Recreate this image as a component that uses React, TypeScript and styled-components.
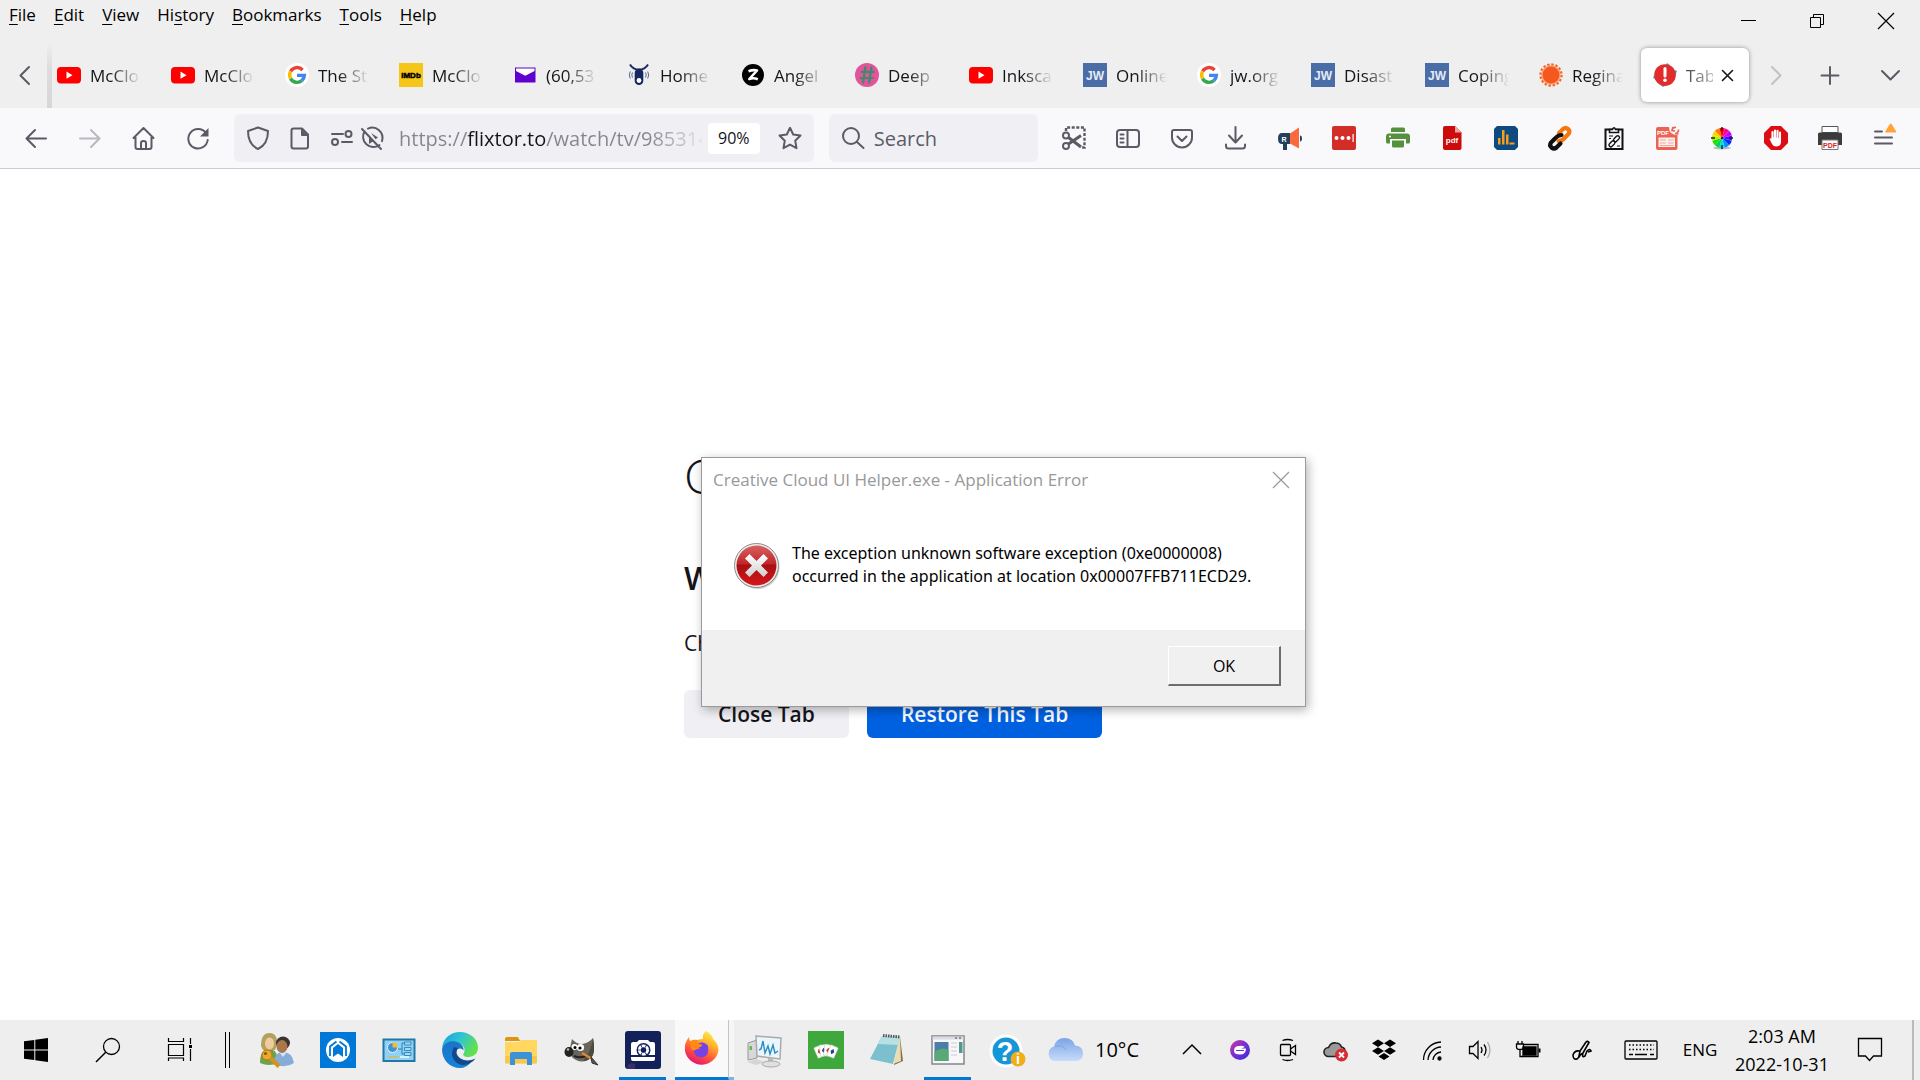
import React from "react";
import styled, { createGlobalStyle, css } from "styled-components";

const GlobalStyle = createGlobalStyle`
  *, *::before, *::after { box-sizing: border-box; }
  html, body { margin: 0; padding: 0; height: 100%; }
  body {
    font-family: "Open Sans", "Noto Sans", "Liberation Sans", sans-serif;
    font-size: 17px;
    line-height: 24px;
    color: #15141a;
    background: #fff;
    overflow: hidden;
  }
  #root { height: 100%; }
  button, input { font: inherit; color: inherit; }
`;

/* ---------- shared ---------- */

const Desktop = styled.div`
  height: 100vh;
  display: flex;
  flex-direction: column;
`;

const Icon = styled.svg<{ $size?: number }>`
  width: ${(p) => p.$size ?? 24}px;
  height: ${(p) => p.$size ?? 24}px;
  flex: none;
  display: block;
  overflow: visible;
`;

const PlainButton = styled.button`
  appearance: none;
  border: 0;
  padding: 0;
  margin: 0;
  background: transparent;
  display: flex;
  align-items: center;
  justify-content: center;
  flex: none;
`;

/* ---------- title area ---------- */

const TitleBar = styled.header`
  display: flex;
  justify-content: space-between;
  height: 42px;
  background: #efefef;
`;

const MenuBar = styled.nav`
  display: flex;
  gap: 18px;
  padding: 3px 9px 0;
  height: 30px;
`;

const MenuItem = styled(PlainButton)`
  color: #000;
  height: 24px;
`;

const Mnemonic = styled.span`
  text-decoration: underline;
  text-underline-offset: 3px;
  text-decoration-thickness: 1px;
`;

const WindowControls = styled.div`
  display: flex;
`;

const WindowButton = styled(PlainButton)`
  width: 69px;
  height: 42px;
`;

/* ---------- tabs ---------- */

const TabBar = styled.div`
  display: flex;
  height: 66px;
  background: #efefef;
`;

const TabBarButton = styled(PlainButton)<{ $width: number; $first?: boolean }>`
  width: ${(p) => p.$width}px;
  padding-left: ${(p) => (p.$first ? 8 : 0)}px;
  color: #5b5b66;
`;

const TabStrip = styled.div`
  position: relative;
  flex: 1;
  min-width: 0;
  display: flex;
  &::before {
    content: "";
    position: absolute;
    left: 5px;
    top: 0;
    bottom: 0;
    width: 5px;
    background: linear-gradient(to bottom, rgba(0, 0, 0, 0), rgba(0, 0, 0, 0.08) 40%, rgba(0, 0, 0, 0.1));
  }
`;

const TabButton = styled.div<{ $active?: boolean }>`
  flex: 1 1 0;
  min-width: 0;
  display: flex;
  align-items: center;
  gap: 9px;
  margin: 6px 3px;
  padding: 0 12px;
  border-radius: 6px;
  ${(p) =>
    p.$active &&
    css`
      background: #fff;
      box-shadow: 0 0 4px rgba(0, 0, 0, 0.4);
    `}
`;

const TabLabel = styled(PlainButton)<{ $active?: boolean }>`
  flex: 1;
  min-width: 0;
  height: 26px;
  padding-top: 2px;
  overflow: hidden;
  justify-content: flex-start;
  white-space: nowrap;
  color: #15141a;
  mask-image: linear-gradient(to right, ${(p) => (p.$active ? "rgba(0,0,0,.8), rgba(0,0,0,.3)" : "#000 40%, transparent")});
`;

const TabClose = styled(PlainButton)`
  width: 24px;
  height: 24px;
  margin: 0 -3px 0 -6px;
`;

/* ---------- navigation ---------- */

const NavBar = styled.div`
  display: flex;
  align-items: center;
  height: 61px;
  padding: 0 9px;
  background: #f9f9fb;
  border-bottom: 1px solid #ccc;
`;

const ToolButton = styled(PlainButton)<{ $dim?: boolean }>`
  width: 54px;
  height: 48px;
  color: #5b5b66;
  opacity: ${(p) => (p.$dim ? 0.4 : 1)};
`;

const UrlBox = styled.div`
  flex: 3 1 0;
  min-width: 0;
  display: flex;
  align-items: center;
  gap: 18px;
  height: 48px;
  margin: 0 15px 0 9px;
  padding: 0 12px;
  border-radius: 6px;
  background: #f0f0f4;
  color: #5b5b66;
`;

const IconPair = styled.div`
  display: flex;
  gap: 6px;
`;

const UrlInput = styled.input`
  flex: 1;
  min-width: 0;
  border: 0;
  outline: 0;
  padding: 2px 0 0;
  margin: 0 -12px 0 -3px;
  font-size: 20px;
  line-height: 28px;
  color: transparent;
  background: linear-gradient(to right, #84848c 68px, #15141a 68px, #15141a 147px, #84848c 147px, #84848c 250px, transparent 308px);
  -webkit-background-clip: text;
  background-clip: text;
`;

const ZoomBadge = styled(PlainButton)`
  width: 52px;
  height: 31px;
  border-radius: 4px;
  background: #fff;
  color: #15141a;
  font-size: 16px;
`;

const SearchBox = styled.label`
  flex: 1 1 0;
  min-width: 0;
  display: flex;
  align-items: center;
  gap: 9px;
  height: 48px;
  margin-right: 9px;
  padding: 0 12px;
  border-radius: 6px;
  background: #f0f0f4;
  color: #5b5b66;
`;

const SearchInput = styled.input`
  flex: 1;
  min-width: 0;
  border: 0;
  outline: 0;
  padding: 2px 0 0;
  background: transparent;
  font-size: 20px;
  line-height: 28px;
  &::placeholder { color: #5b5b66; opacity: 1; }
`;

/* ---------- page ---------- */

const Page = styled.main`
  position: relative;
  flex: 1;
  min-height: 0;
  background: #fff;
  padding: 275px 0 0 684px;
`;

const CrashTitle = styled.h1`
  max-width: 600px;
  overflow: hidden;
  white-space: nowrap;
  margin: 0;
  font-size: 48px;
  line-height: 64px;
  font-weight: 300;
`;

const CrashSubtitle = styled.h2`
  margin: 48px 0 0;
  font-size: 32px;
  line-height: 44px;
  font-weight: 600;
`;

const CrashText = styled.p`
  margin: 29px 0 33px;
  font-size: 21px;
  line-height: 28px;
`;

const CrashActions = styled.div`
  display: flex;
  gap: 18px;
`;

const CrashButton = styled(PlainButton)<{ $primary?: boolean }>`
  height: 48px;
  padding: 0 34px;
  border-radius: 6px;
  font-size: 21px;
  font-weight: 600;
  background: ${(p) => (p.$primary ? "#0061e0" : "#f0f0f4")};
  color: ${(p) => (p.$primary ? "#fbfbfe" : "#15141a")};
`;

/* ---------- dialog ---------- */

const Dialog = styled.section`
  position: absolute;
  left: 701px;
  top: 288px;
  width: 605px;
  border: 1px solid #9a9a9a;
  background: #fff;
  box-shadow: 2px 3px 10px rgba(0, 0, 0, 0.3);
  color: #000;
`;

const DialogHeader = styled.div`
  display: flex;
  align-items: center;
  justify-content: space-between;
  height: 44px;
  padding: 0 12px 0 11px;
  color: #999;
`;

const DialogTitle = styled.h3`
  margin: 0;
  font-size: 17px;
  font-weight: 400;
`;

const DialogClose = styled(PlainButton)`
  width: 24px;
  height: 24px;
`;

const DialogBody = styled.div`
  display: flex;
  align-items: center;
  gap: 12px;
  height: 128px;
  padding: 0 20px 2px 31px;
`;

const DialogText = styled.p`
  margin: 0;
  font-family: "Noto Sans", "Open Sans", sans-serif;
  font-size: 16px;
  line-height: 23px;
  white-space: pre-line;
`;

const DialogFooter = styled.div`
  display: flex;
  justify-content: flex-end;
  padding: 16px 24px 20px;
  background: #f0f0f0;
`;

const OkButton = styled(PlainButton)`
  width: 113px;
  height: 40px;
  border: solid;
  border-width: 1px 2px 2px 1px;
  border-color: #fff #6d6d6d #6d6d6d #fff;
  background: #f0f0f0;
  font-size: 16px;
`;

/* ---------- taskbar ---------- */

const TaskBar = styled.footer`
  display: flex;
  align-items: stretch;
  height: 60px;
  background: #eee;
  color: #000;
`;

const SystemButton = styled(PlainButton)`
  width: 72px;
`;

const TaskDivider = styled.div`
  width: 5px;
  margin: 12px 16px 12px 9px;
  border: solid #000;
  border-width: 0 1px;
`;

const AppButton = styled(PlainButton)<{ $running?: boolean }>`
  position: relative;
  width: 61px;
  ${(p) =>
    p.$running &&
    css`
      &::after {
        content: "";
        position: absolute;
        left: 7px;
        right: 7px;
        bottom: 0;
        height: 3px;
        background: #0078d4;
      }
    `}
`;

const StackedApp = styled(PlainButton)`
  width: 61px;
  padding-left: 2px;
  align-items: stretch;
`;

const StackFront = styled.span`
  flex: 1;
  display: flex;
  align-items: center;
  justify-content: center;
  background: #f9f9f9;
  border-right: 1px solid #c4c4c4;
  border-bottom: 3px solid #0078d4;
`;

const StackBack = styled.span`
  width: 5px;
  background: #f6f6f6;
  border-bottom: 3px solid #76b5e6;
`;

const Weather = styled(PlainButton)`
  gap: 12px;
  padding-left: 8px;
  font-size: 20px;
`;

const Spacer = styled.div`
  flex: 1;
`;

const TrayButton = styled(PlainButton)<{ $width?: number }>`
  width: ${(p) => p.$width ?? 48}px;
`;

const NotificationButton = styled(PlainButton)`
  width: 78px;
  padding-right: 6px;
`;

const Clock = styled(PlainButton)`
  width: 104px;
  flex-direction: column;
  font-size: 18px;
  line-height: 28px;
`;

const ShowDesktop = styled(PlainButton)`
  width: 8px;
  border-left: 2px solid #bbb;
`;

/* ---------- icons ---------- */

const line = { fill: "none", stroke: "currentColor", strokeWidth: 2, strokeLinecap: "round", strokeLinejoin: "round" } as const;
const svgText = { fontFamily: "Liberation Sans, sans-serif", fontWeight: 700, textAnchor: "middle" } as const;

const YouTube = () => (
  <Icon viewBox="0 0 24 24">
    <rect x="0" y="4" width="24" height="16.5" rx="4" fill="#f00" />
    <path d="M9.500 8.600v7.200l6-3.600z" fill="#fff" />
  </Icon>
);
const Google = () => (
  <Icon viewBox="0 0 24 24">
    <circle cx="12" cy="12" r="12" fill="#fff" />
    <g fill="none" strokeWidth="3.400">
      <path d="M17.600 7A7.400 7.400 0 0 0 5.600 8.400" stroke="#ea4335" />
      <path d="M5.600 8.400a7.600 7.600 0 0 0 0 7.200" stroke="#fbbc05" />
      <path d="M5.600 15.600a7.400 7.400 0 0 0 11.200 2" stroke="#34a853" />
      <path d="M16.800 17.600a7 7 0 0 0 2.600-5.200H12" stroke="#4285f4" />
    </g>
  </Icon>
);
const Imdb = () => (
  <Icon viewBox="0 0 24 24">
    <path d="M0 0h24v24H0z" fill="#f5c518" />
    <text x="12" y="15" fontSize="8" stroke="#000" strokeWidth=".5" {...svgText}>IMDb</text>
  </Icon>
);
const YMail = () => (
  <Icon viewBox="0 0 24 24">
    <path d="M2 4.500h20.500v15H2z" fill="#6001d2" />
    <path d="M3 5.500h18.500v2.500l-9.200 4.800L3 8z" fill="#fff" />
  </Icon>
);
const Bell = () => (
  <Icon viewBox="0 0 24 24">
    <path d="M3 1.500c2.500 4.200 6 5.200 9 5.200s6.500-1 9-5.200" fill="none" stroke="#1c2b63" strokeWidth="2" />
    <rect x="7.700" y="5.500" width="8.600" height="16.500" rx="4.300" fill="#14275f" />
    <circle cx="12" cy="17.500" r="2.400" fill="#fff" />
    <path d="M5.500 9.500q-1.500 2.500 0 5M3.300 8.500q-2 3.500 0 7M18.500 9.500q1.500 2.500 0 5M20.700 8.500q2 3.500 0 7" fill="none" stroke="#5a6790" />
  </Icon>
);
const Zazzle = () => (
  <Icon viewBox="0 0 24 24">
    <circle cx="12" cy="12" r="11" />
    <path d="M7.500 8.300q4.500-1.800 8.500-.8L8.300 16q4.700-1.600 8.500.3" fill="none" stroke="#fff" strokeWidth="2.600" strokeLinejoin="round" />
  </Icon>
);
const Hash = () => (
  <Icon viewBox="0 0 24 24">
    <circle cx="12" cy="12" r="12" fill="#e0559c" />
    <path d="M10.500 3.500L8 20.500M16.500 3.500L14 20.500M6 8.800h13.500M5 15h13.500" stroke="#3f8a68" strokeWidth="2.200" />
  </Icon>
);
const Jw = () => (
  <Icon viewBox="0 0 24 24">
    <path d="M0 0h24v24H0z" fill="#4a6da7" />
    <text x="12" y="16.500" fontSize="12" fill="#e6ecf5" {...svgText}>JW</text>
  </Icon>
);
const Sun = () => (
  <Icon viewBox="0 0 24 24">
    <circle cx="12" cy="12" r="10.500" fill="none" stroke="#f26522" strokeWidth="2.400" strokeDasharray="2.400 1.720" />
    <circle cx="12" cy="12" r="9.800" fill="#f9a57a" />
    <circle cx="12" cy="12" r="8.400" fill="#f4581c" />
  </Icon>
);
const Crash = () => (
  <Icon viewBox="0 0 24 24">
    <path d="M14 0l3 2-6 3zM22 7l2 1-2 6zM1 12l-1 3 4 2zM7 22l3 2 4-2z" fill="#4aa8d8" />
    <circle cx="12" cy="12" r="10.800" fill="#e22b2b" />
    <path d="M12 5.500v7.500" stroke="#fff" strokeWidth="3" strokeLinecap="round" />
    <circle cx="12" cy="17.300" r="1.800" fill="#fff" />
  </Icon>
);

const BarIcons = {
  left: <Icon viewBox="0 0 24 24"><path d="M16 4l-8.500 8.500L16 21" {...line} /></Icon>,
  right: <Icon viewBox="0 0 24 24"><path d="M8 4l8.500 8.500L8 21" {...line} strokeOpacity=".3" /></Icon>,
  plus: <Icon viewBox="0 0 24 24"><path d="M12 4v17M3.500 12.500h17" {...line} /></Icon>,
  down: <Icon viewBox="0 0 24 24"><path d="M4 8l8.500 8.500L21 8" {...line} /></Icon>,
  close: <Icon viewBox="0 0 24 24"><path d="M6.500 7.500l10 10M16.500 7.500l-10 10" {...line} stroke="#15141a" strokeWidth="1.600" /></Icon>,
};

const Back = () => <Icon viewBox="0 0 24 24"><path d="M22 12.500H3M11 4l-8.500 8.500L11 21" {...line} /></Icon>;
const Forward = () => <Icon viewBox="0 0 24 24"><path d="M2 12.500h19M13 4l8.500 8.500L13 21" {...line} /></Icon>;
const Home = () => (
  <Icon viewBox="0 0 24 24">
    <path d="M1.500 12L11.500 2l10 10M3.500 11v10q0 2 2 2h12q2 0 2-2V11M9 23v-6q0-2 2.500-2t2.500 2v6" {...line} />
  </Icon>
);
const Reload = () => (
  <Icon viewBox="0 0 24 24">
    <path d="M20 7.200A9.700 9.700 0 1 0 21.700 14" {...line} />
    <path d="M22.500 2v8.500H14z" fill="currentColor" />
  </Icon>
);
const Shield = () => <Icon viewBox="0 0 24 24"><path d="M12 1.500L22 5c0 8-2.500 14.500-10 18C4.500 19.500 2 13 2 5z" {...line} /></Icon>;
const PageIcon = () => (
  <Icon viewBox="0 0 24 24">
    <path d="M5.500 2.500H14l6 6v12q0 2-2 2H5.500q-2 0-2-2v-16q0-2 2-2z" {...line} />
    <path d="M13.500 3v6.500h6.500z" fill="currentColor" stroke="currentColor" />
  </Icon>
);
const Permissions = () => (
  <Icon viewBox="0 0 24 24">
    <path d="M2 8h11M12 16h10" {...line} />
    <circle cx="18.500" cy="8" r="3" {...line} />
    <circle cx="5" cy="16" r="3" {...line} />
  </Icon>
);
const NoAutoplay = () => (
  <Icon viewBox="0 0 24 24">
    <path d="M8 2.600a10.300 10.300 0 0 1 14 12.500M19.500 19A10.300 10.300 0 0 1 4.600 5.300M2 3l19 20" {...line} />
    <path d="M11 7l7 4.500-2.500 1.700zM9 11v7l4.500-3z" fill="currentColor" />
  </Icon>
);
const Star = () => <Icon viewBox="0 0 24 24"><path d="M12 1.800l3.200 6.700 7.300 1-5.300 5.200 1.300 7.500-6.500-3.600-6.500 3.600 1.300-7.500L1.500 9.500l7.300-1z" {...line} /></Icon>;
const Magnifier = () => <Icon viewBox="0 0 24 24"><circle cx="10" cy="10" r="8" {...line} /><path d="M16 16l6.500 6" {...line} /></Icon>;

const Screenshot = () => (
  <Icon viewBox="0 0 24 24">
    <path d="M4 5V1.500h18.500v20H19" fill="none" stroke="currentColor" strokeWidth="2.400" strokeDasharray="3 1.600" />
    <circle cx="4" cy="9.500" r="3" {...line} />
    <circle cx="4" cy="20" r="3" {...line} />
    <path d="M6.500 18L19 9.500M6.500 11.500L19 21" fill="none" stroke="currentColor" strokeWidth="3" />
  </Icon>
);
const Sidebar = () => (
  <Icon viewBox="0 0 24 24">
    <rect x="1" y="4" width="22" height="17" rx="3" {...line} />
    <path d="M11.500 4v17M4.500 8.500h3M4.500 12.500h3M4.500 16.500h3" {...line} />
  </Icon>
);
const Pocket = () => <Icon viewBox="0 0 24 24"><path d="M4 4h16q2 0 2 2v5.500a10 10 0 0 1-20 0V6q0-2 2-2zM7.500 10.500L12 15l4.500-4.500" {...line} /></Icon>;
const Download = () => <Icon viewBox="0 0 24 24"><path d="M11.500 1v15M5 9.500l6.500 7 6.500-7M2 18.500V20q0 2.500 2.500 2.500h14q2.500 0 2.500-2.500v-1.500" {...line} /></Icon>;
const Megaphone = () => (
  <Icon viewBox="0 0 24 24">
    <path d="M4 7h8v11H9v6H5v-6H4Q0 18 0 12.500T4 7z" fill="#23405c" />
    <path d="M12 7.500l9-6v21l-9-5z" fill="#fb6a3c" />
    <path d="M22 9.500q2 0 2 3t-2 3z" fill="#23405c" />
    <text x="6" y="15.500" fontSize="7" fill="#fff" {...svgText}>R</text>
  </Icon>
);
const LastPass = () => (
  <Icon viewBox="0 0 24 24">
    <rect width="24" height="24" rx="2" fill="#d32d27" />
    <g fill="#fff"><circle cx="4.500" cy="12" r="2" /><circle cx="10.500" cy="12" r="2" /><circle cx="16.500" cy="12" r="2" /><path d="M20.500 8h1.200v8h-1.200z" /></g>
  </Icon>
);
const Printer = () => (
  <Icon viewBox="0 0 24 24">
    <path d="M5 6V3q0-1.500 1.500-1.500h11Q19 1.500 19 3v3z" fill="#568f3d" />
    <path d="M3 7.500h18q3 0 3 3V16q0 1.500-1.500 1.500H20V13H4v4.500H1.500Q0 17.500 0 16v-5.500q0-3 3-3z" fill="#568f3d" />
    <path d="M6 14.500h12V20q0 1.500-1.500 1.500h-9Q6 21.500 6 20z" fill="#568f3d" />
    <path d="M3 10.500h2" stroke="#fff" strokeWidth="1.500" />
  </Icon>
);
const PdfFile = () => (
  <Icon viewBox="0 0 24 24">
    <path d="M5 0h10l6.500 6.500V22q0 2-2 2H5q-2 0-2-2V2q0-2 2-2z" fill="#cc0b0b" />
    <path d="M15 0l6.500 6.500H15z" fill="#f0a3a3" />
    <text x="12" y="17" fontSize="8" fill="#fff" {...svgText}>pdf</text>
  </Icon>
);
const BarChart = () => (
  <Icon viewBox="0 0 24 24">
    <path d="M3 0h18l3 3v18l-3 3H3l-3-3V3z" fill="#0e4a80" />
    <path d="M4 12h2.500v6.500H4zM8 4h2.500v14.500H8zM12 8.500h2.500v10H12zM15.500 16.500h5v2h-5z" fill="#f5a01b" />
  </Icon>
);
const LinkChain = () => (
  <Icon viewBox="0 0 24 24" fill="none" strokeWidth="4.200" strokeLinecap="round">
    <path d="M10.500 15q4 0 7-4l3-3q2-3-.5-5t-5 0l-4 4" stroke="#f5770d" />
    <path d="M13.500 9q-3.500 0-6.500 3.500l-4 4q-2 3 .5 5t5 0l4-4" stroke="#111" />
  </Icon>
);
const ClipLink = () => (
  <Icon viewBox="0 0 24 24" fill="none" stroke="#111" strokeWidth="2">
    <path d="M3.500 3.500h17v19.500h-17z" />
    <path d="M7.500 6.500v-3h3q1.500-3.500 3 0h3v3z" fill="#f9f9fb" strokeWidth="1.600" />
    <path d="M7 10h4M7 12.500h2M15 20h3" strokeWidth="1.200" />
    <g strokeWidth="1.400"><rect x="11" y="11" width="7" height="3.600" rx="1.800" transform="rotate(-45 14.500 12.800)" /><rect x="6.500" y="16" width="7" height="3.600" rx="1.800" transform="rotate(-45 10 17.800)" /></g>
  </Icon>
);
const PdfSync = () => (
  <Icon viewBox="0 0 24 24">
    <path d="M2 1h11q0 8 8.500 8v13q0 2-2 2H2q-2 0-2-2V3q0-2 2-2z" fill="#ec6353" />
    <path d="M2.500 11.500h16.500v9.500H2.500z" fill="#fdeeee" />
    <path d="M4 14h6M12 14h5.500M4 17h6M12 17h5.500M4 19.500h13.500" stroke="#f2a79d" />
    <text x="7" y="8.500" fontSize="6" fill="#fff" {...svgText}>PDF</text>
    <path d="M16 4a3.500 3.500 0 0 1 4-2.500M22.500 3.500A3.500 3.500 0 0 1 19 7.500M17 1l-1 3.500 3 .5M22.500 8L19 7.500" fill="none" stroke="#ec6353" strokeWidth="1.700" />
  </Icon>
);
const wheelColors = ["#ffd400", "#ff7a00", "#ff0000", "#ff008c", "#c800ff", "#5a00ff", "#0028ff", "#0090ff", "#00e0e0", "#00d060", "#20e000", "#b0f000"];
const ColorWheel = () => (
  <Icon viewBox="0 0 24 24">
    <ellipse cx="12" cy="22" rx="9" ry="1.500" fill="#bbb" />
    {wheelColors.map((c, i) => (
      <path key={c} d="M12 12L9.400 2.200A10 10 0 0 1 14.600 2.200z" fill={c} transform={`rotate(${i * 30 - 60} 12 12)`} />
    ))}
    <path d="M12 1v4M12 19v4M1 12h4M19 12h4" stroke="#222" strokeWidth="1.500" />
    <circle cx="12" cy="12" r="1.200" fill="#222" />
  </Icon>
);
const AdBlock = () => (
  <Icon viewBox="0 0 24 24">
    <path d="M7 0h10l7 7v10l-7 7H7l-7-7V7z" fill="#dc0d15" />
    <path d="M8.500 13V6M11 12V4.500M13.500 12V4.700M16 13V6.500" stroke="#fff" strokeWidth="2.100" strokeLinecap="round" />
    <path d="M7.500 11.500H17v4q0 5-4.500 5-3.500 0-5-3.500L5.500 13q1-1.500 2 0z" fill="#fff" />
  </Icon>
);
const PrintPdf = () => (
  <Icon viewBox="0 0 24 24">
    <path d="M4 .5h16v6H4z" fill="#fff" stroke="#555" />
    <path d="M1.500 6.500h21q1.500 0 1.500 1.500v11h-4v-5H4v5H0V8q0-1.500 1.500-1.500z" fill="#3c3c3c" />
    <path d="M4 14h16v9.500H4z" fill="#fff" stroke="#777" />
    <text x="12" y="21.500" fontSize="7" fill="#d9231d" {...svgText}>PDF</text>
  </Icon>
);
const AppMenu = () => (
  <Icon viewBox="0 0 24 24">
    <path d="M3 5.500h7M3 11.500h17M3 17.500h17" {...line} />
    <path d="M13.500 6l4.500-7.500q.7-1 1.400 0L24 6z" fill="#ffa436" stroke="#ffa436" strokeLinejoin="round" />
  </Icon>
);

const ErrorMark = () => (
  <Icon $size={47} viewBox="0 0 47 47">
    <defs>
      <linearGradient id="err" x1="0" y1="0" x2="0" y2="1"><stop offset="0" stopColor="#d9605f" /><stop offset=".45" stopColor="#c0282c" /><stop offset=".5" stopColor="#a80f14" /><stop offset="1" stopColor="#d5161a" /></linearGradient>
      <linearGradient id="cross" x1="0" y1="0" x2="0" y2="1"><stop offset="0" stopColor="#fff" /><stop offset="1" stopColor="#cfcfcf" /></linearGradient>
    </defs>
    <circle cx="24.500" cy="25" r="22" fill="#000" opacity=".2" />
    <circle cx="23.500" cy="23.500" r="22" fill="#eee" stroke="#8a8a8a" />
    <circle cx="23.500" cy="23.500" r="20" fill="url(#err)" />
    <path d="M16.500 12l7 7 7-7 4.500 4.500-7 7 7 7-4.500 4.500-7-7-7 7-4.500-4.500 7-7-7-7z" fill="url(#cross)" />
  </Icon>
);

const WinStart = () => <Icon viewBox="0 0 24 24"><path d="M0 3.300l10.300-1.400v9.600H0zM11.300 1.700L24 0v11.500H11.300zM0 12.500h10.300v9.600L0 20.700zM11.300 12.500H24V24l-12.700-1.700z" /></Icon>;
const TaskSearch = () => <Icon viewBox="0 0 24 24"><circle cx="15.500" cy="8.500" r="8" fill="none" stroke="#000" strokeWidth="1.300" /><path d="M9.700 14.300L0 24" stroke="#000" strokeWidth="1.500" /></Icon>;
const TaskView = () => (
  <Icon viewBox="0 0 24 24" fill="none" stroke="#000" strokeWidth="1.200">
    <path d="M.5 0v3.500h15V0M.5 6.500h15v11H.5zM.5 23v-3h15v3M22.500 0v6M22.500 11v12" />
    <path d="M21 7h3v3h-3z" fill="#000" stroke="none" />
  </Icon>
);
const Users = () => (
  <Icon $size={36} viewBox="0 0 36 36">
    <path d="M1 31q0-14 9-14t9 14q-9 4-18 0z" fill="#6fa24a" />
    <path d="M2 14Q2 1 10.500 1T18 13l-2 5H4z" fill="#b3a15f" /><ellipse cx="10.500" cy="11.500" rx="4.500" ry="6" fill="#f0cba0" />
    <path d="M15 32q0-12 9-12t11 11q-9 6-20 1z" fill="#86acd8" /><path d="M20 20h8l-4 5z" fill="#d5e4f5" />
    <ellipse cx="24" cy="11" rx="7" ry="6.500" fill="#3a3431" /><ellipse cx="23" cy="14.500" rx="5.500" ry="6.500" fill="#a8784c" />
    <circle cx="8" cy="23" r="5" fill="#e9ab2d" stroke="#b97710" /><circle cx="6.500" cy="21.500" r="1.600" fill="#8b5a08" />
    <path d="M11.500 26l8.500 8.500" stroke="#d8921b" strokeWidth="4" />
  </Icon>
);
const Acronis = () => (
  <Icon $size={36} viewBox="0 0 36 36">
    <path d="M0 0h36v36H0z" fill="#0078d7" />
    <circle cx="18" cy="18" r="12" fill="#fff" />
    <path d="M10 24V14.500l6.500-5M26 24V14.500l-6.500-5" fill="none" stroke="#0078d7" strokeWidth="1.800" />
    <path d="M13 25V16l5-4 5 4v9l-5-3.500z" fill="#0078d7" />
  </Icon>
);
const ControlPanel = () => (
  <Icon $size={36} viewBox="0 0 36 36">
    <rect x="2.500" y="7.500" width="31" height="21.500" fill="#8fd2f5" stroke="#2178a6" strokeWidth="2" />
    <circle cx="11.500" cy="15.500" r="5" fill="#3d92cf" stroke="#e6f6ff" /><path d="M11.500 15.500v-5.500a5.500 5.500 0 0 1 5.500 5.500z" fill="#f0bb3a" />
    <path d="M17 17h4v-6h3M21 17v5h3" fill="none" stroke="#2980b0" />
    <path d="M23.500 10h6.500v3h-6.500zM23.500 15.500h6.500v3h-6.500zM23.500 20.500h6.500v3h-6.500z" fill="#9fdcf8" stroke="#398abb" />
    <path d="M7 25h11" stroke="#d8b65a" strokeWidth="1.500" /><path d="M19 25h9" stroke="#d5f1ff" strokeWidth="2" />
  </Icon>
);
const Edge = () => (
  <Icon $size={36} viewBox="0 0 36 36">
    <defs>
      <linearGradient id="eg" x1="0" y1="0" x2="1" y2=".5"><stop offset="0" stopColor="#1b9de0" /><stop offset=".5" stopColor="#2ec4d4" /><stop offset="1" stopColor="#63e04e" /></linearGradient>
      <linearGradient id="eb" x1="0" y1="0" x2="0" y2="1"><stop offset="0" stopColor="#1b74c8" /><stop offset="1" stopColor="#1583d8" /></linearGradient>
    </defs>
    <path d="M0 16C1 6 9 0 18 0c10 0 18 7 18 15.500 0 6-4.500 9.500-9.500 9.500-4 0-6-1.500-5-3.500 2-2.500 1.500-7-3-9.500C12 8.500 3 10 0 16z" fill="url(#eg)" />
    <path d="M0 17.500C1 11 8 8.500 13 9.500c6 1 9 5 8.500 9-1.500-3-7-3-7.500 2 0 7 8 11 15 9.500Q24.500 36 18 36C8 36 0 28 0 17.500z" fill="url(#eb)" />
    <path d="M12 15q-4 7 0 13 6 8 15.500 3.500 4-2 6-5c-8 4-17 1.500-19-5.500q-.5-3 1.500-5z" fill="#114a8b" />
  </Icon>
);
const Folder = () => (
  <Icon $size={36} viewBox="0 0 36 36">
    <path d="M2 7q0-2 2-2h11l2 4H2z" fill="#d9980f" />
    <path d="M2 10h14l2-2h16v22q0 1.500-1.500 1.500h-29Q2 31.500 2 30z" fill="#ffd761" />
    <path d="M2 24h32v6q0 1.500-1.500 1.500h-29Q2 31.500 2 30z" fill="#f7c84a" />
    <path d="M7 33V22q0-2 2-2h18q2 0 2 2v11h-5v-6H12v6z" fill="#3c92d8" />
  </Icon>
);
const Gimp = () => (
  <Icon $size={36} viewBox="0 0 36 36">
    <path d="M6 16q1-5 2-9 4 5 10 5 7-1 11-6 3 15-2 20-7 6-15 2-7-3-6-12z" fill="#69655a" />
    <path d="M29 6q3 15-2 20-4 3-8 3 8-8 10-23z" fill="#4c493f" />
    <circle cx="10.500" cy="15" r="3" fill="#fff" /><circle cx="16.500" cy="15.500" r="3.600" fill="#fff" /><circle cx="11" cy="15.500" r="1.500" /><circle cx="16" cy="16" r="1.600" />
    <ellipse cx="5" cy="20" rx="4.500" ry="5" fill="#222" /><circle cx="4" cy="17.500" r="1.200" fill="#bbb" />
    <path d="M10 24q8 3 13-1" stroke="#222" strokeWidth="2" fill="none" /><path d="M18 21l10 6" stroke="#d98a34" strokeWidth="2.500" /><path d="M27 25l7 8-6-2z" fill="#555" stroke="#333" />
  </Icon>
);
const Camera = () => (
  <Icon $size={36} viewBox="0 0 36 36">
    <rect width="36" height="38" y="-1" rx="3" fill="#12215a" /><path d="M2 37q0-8 8-5v5z" fill="#3c2d6a" />
    <path d="M8 10h4l2-2h9l2 2h3q2 0 2 2v11H6V12q0-2 2-2zM6 25h24v2q0 2-2 2H8q-2 0-2-2z" fill="#fff" />
    <circle cx="18.500" cy="18" r="7" fill="#12215a" /><circle cx="18.500" cy="18" r="4.200" fill="none" stroke="#fff" strokeWidth="2.800" strokeDasharray="3.600 .8" /><circle cx="18.500" cy="18" r="2.200" fill="#12215a" />
  </Icon>
);
const Firefox = () => (
  <Icon $size={36} viewBox="0 0 36 36">
    <defs><linearGradient id="ff" x1=".8" y1="0" x2=".3" y2="1"><stop offset="0" stopColor="#fff44f" /><stop offset=".35" stopColor="#ffb02e" /><stop offset=".65" stopColor="#ff5a36" /><stop offset="1" stopColor="#e2107a" /></linearGradient></defs>
    <path d="M22 0q6 3 7 8 5 4 5.500 11A17 17 0 0 1 1 20Q0 12 5 6q0 3 1.500 4Q9 8 13 9q4-1 6-1-1-5 3-8z" fill="url(#ff)" />
    <path d="M12 13q8-4 12 2 2 10-6 11.500-8 0-8.500-8 3 1 7-1.500-4 0-4.500-4z" fill="#7542e5" />
    <path d="M6 12q4-4 7-3l2 4q4 0 3 2l-5 2.500q-1 2-4 2-3-3-3-7.500z" fill="#ff8a16" />
  </Icon>
);
const PerfMon = () => (
  <Icon $size={36} viewBox="0 0 36 36">
    <path d="M1 11l9-3v18l-9 2z" fill="#d6d8da" stroke="#999" /><path d="M2.500 14h2.500v4H2.500z" fill="#5fbf3f" />
    <path d="M0 30l9-3 9 3-9 3z" fill="#d5d5d5" />
    <path d="M9 4l25 2-1 21-23-3z" fill="#eaf6fc" stroke="#aaa" strokeWidth="1.500" />
    <path d="M12 18l2-1 2-8 2 12 3-7 2 8 3-9 2 8 3-2" fill="none" stroke="#2a8bc4" strokeWidth="1.400" />
    <path d="M21 26h5v5h-5z" fill="#bbb" /><ellipse cx="24" cy="32" rx="9" ry="3" fill="#e0e0e0" stroke="#aaa" />
  </Icon>
);
const Cards = () => (
  <Icon $size={36} viewBox="0 0 36 36">
    <path d="M0-1h36v38H0z" fill="#3fa83d" />
    {[-24, -8, 8, 24].map((a, i) => (
      <g key={a} transform={`rotate(${a} 18 34)`}>
        <rect x="14" y="12.500" width="8" height="11.500" rx="1" fill="#fff" stroke="#a9c9a8" strokeWidth=".5" />
        <path d="M18 15.500l2 2.800-2 2.800-2-2.800z" fill={i % 2 ? "#24408e" : "#d32"} />
      </g>
    ))}
  </Icon>
);
const Notepad = () => (
  <Icon $size={36} viewBox="0 0 36 36">
    <path d="M31 5l3 24-9 4z" fill="#8b6d3a" />
    <path d="M13 4l18 1-7 27-23-5z" fill="#7cc0cf" /><path d="M13 4l18 1-2 8-20-1z" fill="#b6e0e6" /><path d="M24 32l7-27 1 24z" fill="#e8ddb8" />
    <path d="M14 3.500l17 1.500" stroke="#555" strokeWidth="3" strokeDasharray="1.500 1" />
  </Icon>
);
const AppWindow = () => (
  <Icon $size={36} viewBox="0 0 36 36">
    <rect x="2" y="4" width="32" height="28" fill="#f7f7f9" stroke="#85858c" strokeWidth="1.500" /><path d="M2.500 4.500h31v3h-31z" fill="#d9dae4" />
    <path d="M4.500 10h14v19h-14z" fill="#4b7fa8" /><path d="M4.500 20q8-6 14-2v11h-14z" fill="#5aa878" />
    <path d="M21 11h6M21 15h6M21 19h6M21 23h6" stroke="#ccc" /><path d="M29 10h3.500v11H29z" fill="#4f9a8e" /><path d="M25 6h2M29 6h2" stroke="#444" />
  </Icon>
);
const HelpInfo = () => (
  <Icon $size={36} viewBox="0 0 36 36">
    <circle cx="15" cy="19" r="16.500" fill="#fff" /><circle cx="15" cy="19" r="13.500" fill="#1596d6" />
    <text x="14" y="28.500" fontSize="27" fill="#fff" {...svgText}>?</text>
    <circle cx="27" cy="27" r="7.500" fill="#f0ae1c" /><text x="27" y="32" fontSize="14" fill="#fff" {...svgText}>i</text>
  </Icon>
);
const Cloud = () => (
  <Icon $size={36} viewBox="0 0 36 36">
    <defs><linearGradient id="cl" x1="0" y1="0" x2="0" y2="1"><stop offset="0" stopColor="#7ba3e6" /><stop offset="1" stopColor="#c8dcfa" /></linearGradient></defs>
    <path d="M7.500 29A7.500 7.500 0 0 1 7 14.500Q9 6 17.500 6T28 13.500Q36 14 36 21.500 36 29 28.500 29z" fill="url(#cl)" />
    <path d="M8 14.500Q15 12 19 18" fill="none" stroke="#6f98dd" opacity=".6" />
  </Icon>
);

const traySvg = { fill: "none", stroke: "#000", strokeWidth: 1.3 } as const;
const trayIcons: { label: string; icon: React.ReactNode; width?: number }[] = [
  { label: "Show hidden icons", icon: <Icon viewBox="0 0 24 24" {...traySvg}><path d="M3 16l9-9 9 9" strokeWidth="1.500" /></Icon> },
  {
    label: "Chat",
    icon: (
      <Icon viewBox="0 0 24 24">
        <defs><linearGradient id="pu" x1="0" y1="0" x2="1" y2="1"><stop offset="0" stopColor="#d33a9d" /><stop offset=".5" stopColor="#7430cf" /><stop offset="1" stopColor="#3a2be0" /></linearGradient></defs>
        <circle cx="12" cy="12" r="10" fill="url(#pu)" />
        <path d="M6 13q0-5 5-5 3-1 6 1l-4 1.500h5q0 6-6 6t-6-3.500z" fill="#fff" /><path d="M8 12.500h8" stroke="#7430cf" />
      </Icon>
    ),
  },
  { label: "Meet now", icon: <Icon viewBox="0 0 24 24" {...traySvg}><rect x="4.500" y="6.500" width="10" height="11" rx="1" /><path d="M14.500 11l5-3.500v9l-5-3.500M6.500 2.500q5-2 10.500 0M6.500 21.500q5 2 10.500 0" /></Icon> },
  {
    label: "OneDrive",
    icon: (
      <Icon viewBox="0 0 24 24">
        <path d="M4.500 18.500a4.500 4.500 0 0 1 0-9Q7 4 12 5q4 0 5.500 4 4 1 3.500 5l-5 4.500z" fill="#9a9a9a" stroke="#222" strokeWidth="1.600" />
        <circle cx="17.500" cy="17" r="6.500" fill="#d92b35" /><path d="M15 14.500l5 5M20 14.500l-5 5" stroke="#fff" strokeWidth="1.800" />
      </Icon>
    ),
  },
  { label: "Dropbox", icon: <Icon viewBox="0 0 24 24"><path d="M6 1.500l6 3.800-6 3.800-6-3.800zM18 1.500l6 3.800-6 3.800-6-3.800zM6 9.200l6 3.800-6 3.800L0 13zM18 9.200l6 3.800-6 3.800-6-3.800zM12 15l5.500 3.500L12 22l-5.500-3.500z" /></Icon> },
  { label: "Network", icon: <Icon viewBox="0 0 24 24" {...traySvg}><path d="M3.500 22A18 18 0 0 1 21 4M8 22A13.500 13.500 0 0 1 21 9M13 22a8.500 8.500 0 0 1 8-8" /><circle cx="19.500" cy="20.500" r="1.500" fill="#000" /></Icon> },
  { label: "Volume", icon: <Icon viewBox="0 0 24 24" {...traySvg}><path d="M1.500 8.500H5l5-5v17l-5-5H1.500zM13 9q2 3 0 6M16 6.500q4 5.500 0 11" /><path d="M19.500 4q5 8 0 16" stroke="#aaa" /></Icon> },
  { label: "Battery", icon: <Icon viewBox="0 0 24 24" {...traySvg}><path d="M6 18.500h16v-12H8" /><path d="M7 9h13v8H7z" fill="#000" /><path d="M23.500 10.500v4" strokeWidth="2" /><path d="M2 3v3M6 3v3M.5 6h7v3q0 2.500-3.500 2.500T.5 9zM4 11.500v7h3" /></Icon> },
  { label: "Windows Ink", width: 60, icon: <Icon viewBox="0 0 24 24" {...traySvg}><path d="M9 18l1-5L16 4q1.500-1.500 3 .5L13 15zM9.500 13q-5-1-6.500 4 0 5 4 4l3-3M13 15q-1.500 5 2 3l2-5q3-3 4 0l-3 1" strokeWidth="1.600" /></Icon> },
  {
    label: "Touch keyboard",
    width: 58,
    icon: <Icon $size={34} viewBox="0 0 34 34" {...traySvg}><rect x="1" y="8" width="32" height="18" rx="1" /><path d="M5 12h25M5 16.500h25" strokeDasharray="1.500 2" /><path d="M5 21.500h4M11 21.500h12M26 21.500h4" /></Icon>,
  },
];

const tabs: [React.FC, string][] = [
  [YouTube, "McClo"], [YouTube, "McClo"], [Google, "The St"], [Imdb, "McClo"], [YMail, "(60,53"],
  [Bell, "Home"], [Zazzle, "Angel"], [Hash, "Deep"], [YouTube, "Inksca"], [Jw, "Online"],
  [Google, "jw.org"], [Jw, "Disast"], [Jw, "Coping"], [Sun, "Regina"],
];

const menus: [string, string, string][] = [
  ["", "F", "ile"], ["", "E", "dit"], ["", "V", "iew"], ["Hi", "s", "tory"], ["", "B", "ookmarks"], ["", "T", "ools"], ["", "H", "elp"],
];

const tools: [React.FC, string][] = [
  [Screenshot, "Screenshot"], [Sidebar, "Sidebars"], [Pocket, "Save to Pocket"], [Download, "Downloads"],
  [Megaphone, "Announcements"], [LastPass, "Passwords"], [Printer, "Print"], [PdfFile, "Save as PDF"],
  [BarChart, "Statistics"], [LinkChain, "Copy link"], [ClipLink, "Clipboard links"], [PdfSync, "Convert PDF"],
  [ColorWheel, "Colour picker"], [AdBlock, "Ad blocker"], [PrintPdf, "Print to PDF"], [AppMenu, "Application menu"],
];

const appsBefore: [React.FC, string, boolean][] = [
  [Users, "User accounts", false], [Acronis, "Backup", false], [ControlPanel, "Control Panel", false],
  [Edge, "Edge", false], [Folder, "File Explorer", false], [Gimp, "GIMP", false], [Camera, "Photo manager", true],
];
const appsAfter: [React.FC, string, boolean][] = [
  [PerfMon, "Performance monitor", false], [Cards, "Solitaire", false], [Notepad, "Notepad", false],
  [AppWindow, "Application", true], [HelpInfo, "Help", false],
];

export default function App() {
  return (
    <Desktop>
      <GlobalStyle />
      <TitleBar>
        <MenuBar>
          {menus.map(([a, key, b]) => (
            <MenuItem key={a + key + b}><span>{a}<Mnemonic>{key}</Mnemonic>{b}</span></MenuItem>
          ))}
        </MenuBar>
        <WindowControls>
          <WindowButton aria-label="Minimize"><Icon $size={16} viewBox="0 0 16 16"><path d="M1 7.500h15" stroke="#000" /></Icon></WindowButton>
          <WindowButton aria-label="Restore"><Icon $size={16} viewBox="0 0 16 16" fill="none" stroke="#000"><path d="M1.500 4.500h10v10h-10zM4.500 4.500v-3h10v10h-3" /></Icon></WindowButton>
          <WindowButton aria-label="Close"><Icon $size={16} viewBox="0 0 16 16"><path d="M0 0l16 16M16 0L0 16" stroke="#000" strokeWidth="1.200" /></Icon></WindowButton>
        </WindowControls>
      </TitleBar>

      <TabBar>
        <TabBarButton $width={42} $first aria-label="Scroll tabs left">{BarIcons.left}</TabBarButton>
        <TabStrip>
          {tabs.map(([Fav, name], i) => (
            <TabButton key={i}><Fav /><TabLabel>{name}</TabLabel></TabButton>
          ))}
          <TabButton $active>
            <Crash /><TabLabel $active>Tab</TabLabel>
            <TabClose aria-label="Close tab">{BarIcons.close}</TabClose>
          </TabButton>
        </TabStrip>
        <TabBarButton $width={48} aria-label="Scroll tabs right">{BarIcons.right}</TabBarButton>
        <TabBarButton $width={60} aria-label="New tab">{BarIcons.plus}</TabBarButton>
        <TabBarButton $width={60} aria-label="List all tabs">{BarIcons.down}</TabBarButton>
      </TabBar>

      <NavBar>
        <ToolButton aria-label="Back"><Back /></ToolButton>
        <ToolButton $dim aria-label="Forward"><Forward /></ToolButton>
        <ToolButton aria-label="Home"><Home /></ToolButton>
        <ToolButton aria-label="Reload"><Reload /></ToolButton>
        <UrlBox>
          <PlainButton aria-label="Tracking protection"><Shield /></PlainButton>
          <PlainButton aria-label="Page information"><PageIcon /></PlainButton>
          <IconPair>
            <PlainButton aria-label="Permissions"><Permissions /></PlainButton>
            <PlainButton aria-label="Autoplay blocked"><NoAutoplay /></PlainButton>
          </IconPair>
          <UrlInput aria-label="Address" defaultValue="https://flixtor.to/watch/tv/985314" spellCheck={false} />
          <ZoomBadge>90%</ZoomBadge>
          <PlainButton aria-label="Bookmark this page"><Star /></PlainButton>
        </UrlBox>
        <SearchBox>
          <Magnifier />
          <SearchInput aria-label="Search" placeholder="Search" />
        </SearchBox>
        {tools.map(([Tool, name]) => (
          <ToolButton key={name} aria-label={name}><Tool /></ToolButton>
        ))}
      </NavBar>

      <Page>
        <CrashTitle>Gah. Your tab just crashed.</CrashTitle>
        <CrashSubtitle>We can help!</CrashSubtitle>
        <CrashText>Choose Restore This Tab to reload the page.</CrashText>
        <CrashActions>
          <CrashButton>Close Tab</CrashButton>
          <CrashButton $primary>Restore This Tab</CrashButton>
        </CrashActions>

        <Dialog role="alertdialog" aria-labelledby="dialog-title">
          <DialogHeader>
            <DialogTitle id="dialog-title">Creative Cloud UI Helper.exe - Application Error</DialogTitle>
            <DialogClose aria-label="Close dialog"><Icon $size={16} viewBox="0 0 16 16"><path d="M0 0l16 16M16 0L0 16" stroke="#999" strokeWidth="1.200" /></Icon></DialogClose>
          </DialogHeader>
          <DialogBody>
            <ErrorMark />
            <DialogText>{"The exception unknown software exception (0xe0000008)\noccurred in the application at location 0x00007FFB711ECD29."}</DialogText>
          </DialogBody>
          <DialogFooter><OkButton>OK</OkButton></DialogFooter>
        </Dialog>
      </Page>

      <TaskBar>
        <SystemButton aria-label="Start"><WinStart /></SystemButton>
        <SystemButton aria-label="Search Windows"><TaskSearch /></SystemButton>
        <SystemButton aria-label="Task view"><TaskView /></SystemButton>
        <TaskDivider />
        {appsBefore.map(([AppIcon, name, running]) => (
          <AppButton key={name} $running={running} aria-label={name}><AppIcon /></AppButton>
        ))}
        <StackedApp aria-label="Firefox">
          <StackFront><Firefox /></StackFront>
          <StackBack />
        </StackedApp>
        {appsAfter.map(([AppIcon, name, running]) => (
          <AppButton key={name} $running={running} aria-label={name}><AppIcon /></AppButton>
        ))}
        <Weather><Cloud />10°C</Weather>
        <Spacer />
        {trayIcons.map((t) => (
          <TrayButton key={t.label} $width={t.width} aria-label={t.label}>{t.icon}</TrayButton>
        ))}
        <TrayButton $width={60}>ENG</TrayButton>
        <Clock><span>2:03 AM</span><span>2022-10-31</span></Clock>
        <NotificationButton aria-label="Notifications">
          <Icon viewBox="0 0 24 24" {...traySvg}><path d="M.5.500h23v17.500h-8l-4 4.500-4-4.500h-7z" /></Icon>
        </NotificationButton>
        <ShowDesktop aria-label="Show desktop" />
      </TaskBar>
    </Desktop>
  );
}
